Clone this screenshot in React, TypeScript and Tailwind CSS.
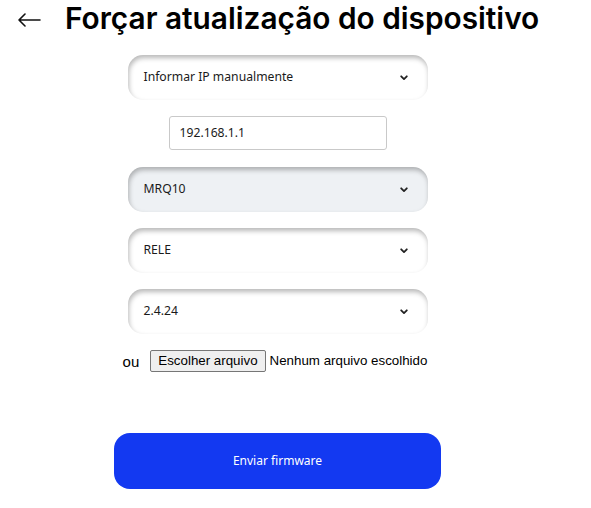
import React from "react";

const Chevron = () => (
  <svg width="8" height="6" viewBox="0 0 8 6" className="shrink-0">
    <path d="M1.2 1.3 L4 4.1 L6.8 1.3" fill="none" stroke="#222" strokeWidth="1.8" strokeLinecap="round" strokeLinejoin="round" />
  </svg>
);

const Select = ({ label, gray }: { label: string; gray?: boolean }) => (
  <div
    className={`w-[300px] h-[45px] rounded-[15px] flex items-center justify-between pl-4 pr-[20px] text-[12.2px] text-[#1a1a1a] shadow-[inset_1px_3px_5px_rgba(0,0,0,0.28)] ${
      gray ? "bg-[#eef1f4]" : "bg-white"
    }`}
    style={{ fontFamily: '"Noto Sans", "Open Sans", sans-serif' }}
  >
    <span>{label}</span>
    <Chevron />
  </div>
);

export default function App() {
  return (
    <div className="w-[591px] h-[508px] bg-white relative overflow-hidden">
      <div className="flex items-center h-[38px] pl-[17px]">
        <svg width="24" height="14" viewBox="0 0 24 14" className="mt-[1px]">
          <path d="M23 7 H2 M8 1 L2 7 L8 13" fill="none" stroke="#111" strokeWidth="1.6" strokeLinecap="round" strokeLinejoin="round" />
        </svg>
        <h1
          className="ml-[24px] text-[29.8px] font-semibold text-black leading-none"
          style={{ fontFamily: 'Inter, "Noto Sans", sans-serif' }}
        >
          Forçar atualização do dispositivo
        </h1>
      </div>
      <div className="w-[555px] flex flex-col items-center mt-[17px]">
        <Select label="Informar IP manualmente" />
        <div
          className="mt-[16px] w-[218px] h-[34px] border border-[#c9c9c9] rounded-[3px] flex items-center pl-[10px] text-[12.2px] text-[#1a1a1a]"
          style={{ fontFamily: '"Noto Sans", "Open Sans", sans-serif' }}
        >
          192.168.1.1
        </div>
        <div className="mt-[17px]">
          <Select label="MRQ10" gray />
        </div>
        <div className="mt-[16px]">
          <Select label="RELE" />
        </div>
        <div className="mt-[16px]">
          <Select label="2.4.24" />
        </div>
        <div
          className="mt-[14px] flex items-center text-[13.33px] text-black mr-[5px]"
          style={{ fontFamily: '"Liberation Sans", Arial, sans-serif' }}
        >
          <span className="text-[15px] mr-[11px] mt-[3px]">ou</span>
          <span className="h-[22px] px-[7px] border border-[#767676] rounded-[2px] bg-[#efefef] flex items-center">
            Escolher arquivo
          </span>
          <span className="ml-[4px]">Nenhum arquivo escolhido</span>
        </div>
        <button
          className="mt-[59px] w-[327px] h-[56px] rounded-[16px] bg-[#1339f1] text-white text-[12px]"
          style={{ fontFamily: '"Noto Sans", "Open Sans", sans-serif' }}
        >
          Enviar firmware
        </button>
      </div>
    </div>
  );
}
